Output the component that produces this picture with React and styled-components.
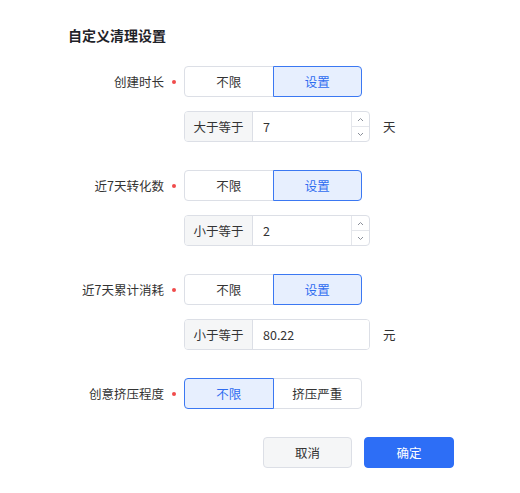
import React, { useState } from 'react';
import styled, { createGlobalStyle } from 'styled-components';

const GlobalStyle = createGlobalStyle`
  body {
    margin: 0;
    background: #fff;
    font-family: "Noto Sans CJK SC", "Noto Sans", sans-serif;
    color: #333;
  }
`;

const Panel = styled.div`
  width: 386px;
  padding: 25px 0 20px 68px;
`;

const Title = styled.h2`
  margin: 0 0 21px;
  font-size: 14px;
  line-height: 20px;
  font-weight: 700;
  color: #1f2329;
`;

const Field = styled.div`
  display: flex;
  flex-direction: column;
  gap: 14px;
  margin-bottom: 28px;
`;

const Row = styled.div`
  display: flex;
  align-items: center;
`;

const Label = styled.div`
  width: 116px;
  flex: none;
  display: flex;
  align-items: center;
  justify-content: flex-end;
  padding-right: 6px;
  box-sizing: border-box;
  font-size: 12.5px;
  color: #333;
`;

const Required = styled.span`
  width: 4px;
  height: 4px;
  border-radius: 50%;
  background: #f04b4b;
  margin-left: 8px;
  margin-right: 2px;
`;

const Indent = styled.div`
  width: 116px;
  flex: none;
`;

const Segmented = styled.div`
  display: flex;
  width: 178px;
  height: 31px;
`;

const Segment = styled.button`
  flex: 1;
  margin: 0;
  padding: 0;
  font-family: inherit;
  font-size: 12.5px;
  cursor: pointer;
  border: 1px solid ${p => (p.$active ? '#3b78f2' : '#dcdfe6')};
  background: ${p => (p.$active ? '#e7effe' : '#fff')};
  color: ${p => (p.$active ? '#2f6cf0' : '#333')};
  position: relative;
  z-index: ${p => (p.$active ? 1 : 0)};
  &:first-child {
    border-radius: 4px 0 0 4px;
  }
  &:last-child {
    border-radius: 0 4px 4px 0;
    margin-left: -1px;
  }
`;

const InputGroup = styled.div`
  display: flex;
  width: 186px;
  height: 31px;
  border: 1px solid #dcdfe6;
  border-radius: 4px;
  box-sizing: border-box;
  overflow: hidden;
`;

const Addon = styled.div`
  width: 67px;
  flex: none;
  display: flex;
  align-items: center;
  justify-content: center;
  background: #f5f6f7;
  border-right: 1px solid #dcdfe6;
  font-size: 12.5px;
  color: #333;
`;

const Value = styled.input`
  flex: 1;
  min-width: 0;
  border: none;
  outline: none;
  padding: 0 10px;
  font-family: inherit;
  font-size: 12.5px;
  color: #333;
  background: #fff;
`;

const Spinner = styled.div`
  width: 17px;
  flex: none;
  display: flex;
  flex-direction: column;
  border-left: 1px solid #e4e6eb;
`;

const SpinBtn = styled.span`
  flex: 1;
  display: flex;
  align-items: center;
  justify-content: center;
  &:first-child {
    border-bottom: 1px solid #e4e6eb;
  }
`;

const Unit = styled.span`
  margin-left: 13px;
  font-size: 12.5px;
  color: #333;
`;

const Footer = styled.div`
  display: flex;
  justify-content: flex-end;
  gap: 12px;
`;

const Button = styled.button`
  width: ${p => (p.$primary ? '90px' : '89px')};
  height: 31px;
  border-radius: 4px;
  font-family: inherit;
  font-size: 12.5px;
  cursor: pointer;
  border: 1px solid ${p => (p.$primary ? '#2d6ef6' : '#dcdfe6')};
  background: ${p => (p.$primary ? '#2d6ef6' : '#f5f6f7')};
  color: ${p => (p.$primary ? '#fff' : '#333')};
`;

const Chevron = ({ up }) => (
  <svg width="7" height="5" viewBox="0 0 7 5">
    <path
      d={up ? 'M1 4 L3.5 1.5 L6 4' : 'M1 1 L3.5 3.5 L6 1'}
      fill="none"
      stroke="#8a8f99"
      strokeWidth="1"
    />
  </svg>
);

const fields = [
  { key: 'age', label: '创建时长', cmp: '大于等于', value: '7', unit: '天', spin: true },
  { key: 'conv', label: '近7天转化数', cmp: '小于等于', value: '2', spin: true },
  { key: 'cost', label: '近7天累计消耗', cmp: '小于等于', value: '80.22', unit: '元' },
];

const App = () => {
  const [modes, setModes] = useState({ age: 1, conv: 1, cost: 1, squeeze: 0 });
  const pick = (key, i) => setModes(m => ({ ...m, [key]: i }));

  return (
    <Panel>
      <GlobalStyle />
      <Title>自定义清理设置</Title>
      {fields.map(f => (
        <Field key={f.key}>
          <Row>
            <Label>
              {f.label}
              <Required />
            </Label>
            <Segmented>
              {['不限', '设置'].map((t, i) => (
                <Segment key={t} $active={modes[f.key] === i} onClick={() => pick(f.key, i)}>
                  {t}
                </Segment>
              ))}
            </Segmented>
          </Row>
          <Row>
            <Indent />
            <InputGroup>
              <Addon>{f.cmp}</Addon>
              <Value defaultValue={f.value} />
              {f.spin && (
                <Spinner>
                  <SpinBtn><Chevron up /></SpinBtn>
                  <SpinBtn><Chevron /></SpinBtn>
                </Spinner>
              )}
            </InputGroup>
            {f.unit && <Unit>{f.unit}</Unit>}
          </Row>
        </Field>
      ))}
      <Field>
        <Row>
          <Label>
            创意挤压程度
            <Required />
          </Label>
          <Segmented>
            {['不限', '挤压严重'].map((t, i) => (
              <Segment key={t} $active={modes.squeeze === i} onClick={() => pick('squeeze', i)}>
                {t}
              </Segment>
            ))}
          </Segmented>
        </Row>
      </Field>
      <Footer>
        <Button>取消</Button>
        <Button $primary>确定</Button>
      </Footer>
    </Panel>
  );
};

export default App;
